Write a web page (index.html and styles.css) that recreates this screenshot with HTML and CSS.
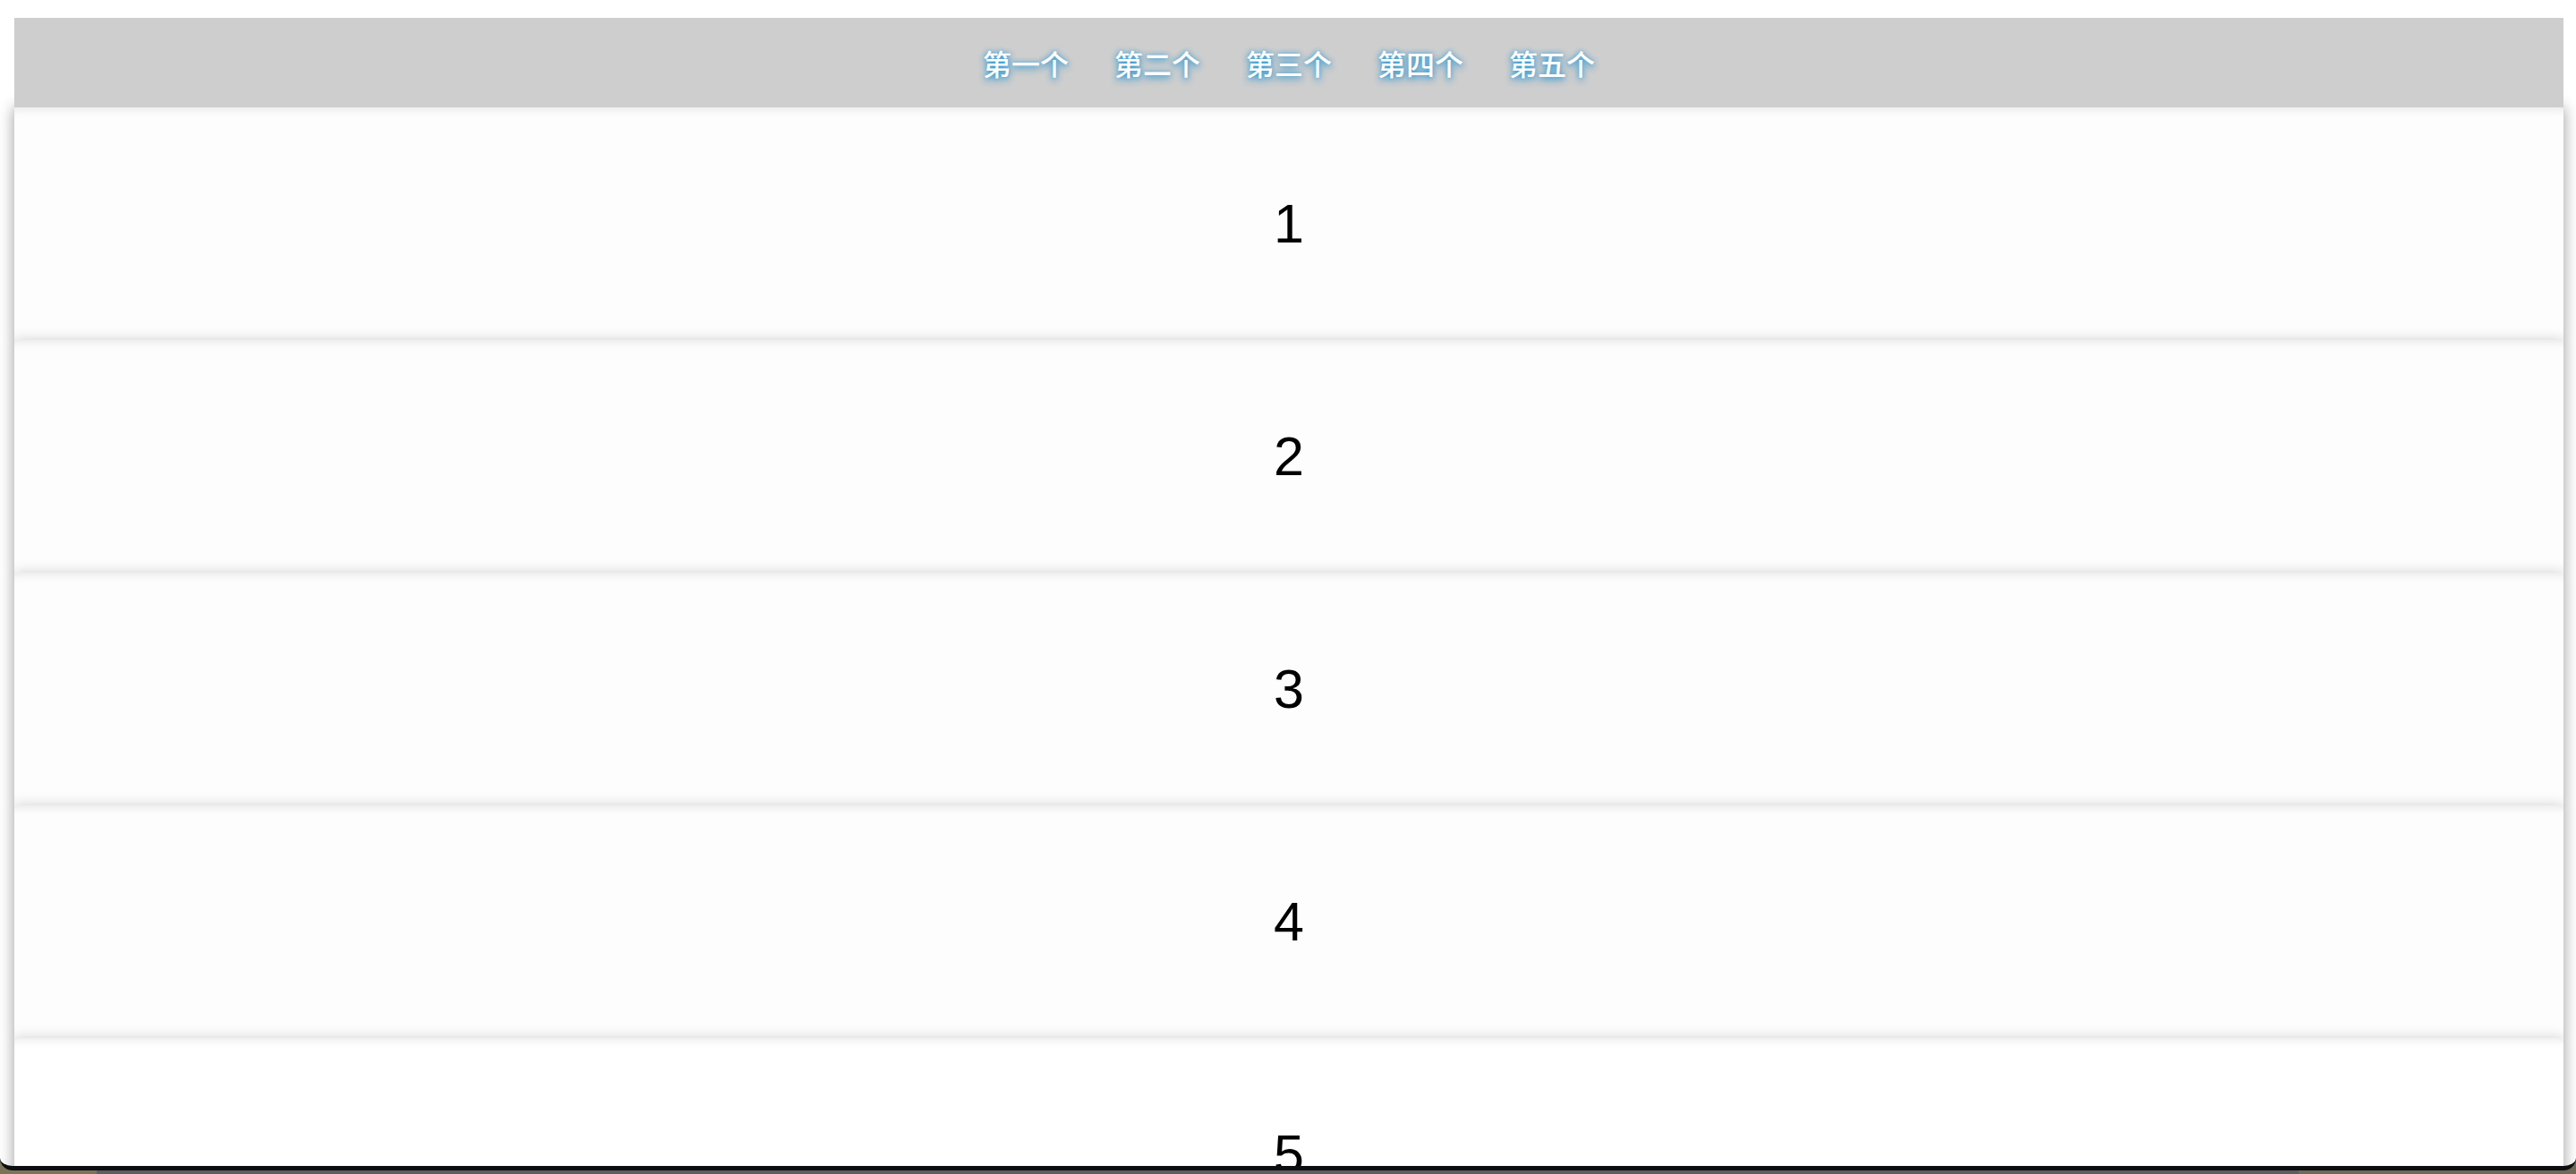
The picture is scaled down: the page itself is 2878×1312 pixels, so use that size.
FILE: index.html
```html
<!DOCTYPE html>
<html lang="zh">
<head>
<meta charset="utf-8">
<title>Tabs</title>
<link rel="stylesheet" href="styles.css">
</head>
<body>
<div class="window">
  <nav class="nav">
    <a class="nav-item">第一个</a>
    <a class="nav-item">第二个</a>
    <a class="nav-item">第三个</a>
    <a class="nav-item">第四个</a>
    <a class="nav-item">第五个</a>
  </nav>
  <main class="panels">
    <section class="panel">1</section>
    <section class="panel">2</section>
    <section class="panel">3</section>
    <section class="panel">4</section>
    <section class="panel panel-last">5</section>
  </main>
</div>
<div class="desktop">
  <div class="desk-left"></div>
  <div class="desk-mid"></div>
  <div class="desk-right"></div>
</div>
</body>
</html>
```

FILE: styles.css
```css
html, body {
  margin: 0;
  padding: 0;
  height: 1312px;
  overflow: hidden;
}
body {
  background: #606060;
  font-family: "Liberation Sans", Arial, sans-serif;
  position: relative;
}
.window {
  height: 1308px;
  background: #ffffff;
  border-bottom: 5px solid #0c0e12;
  border-radius: 0 0 14px 14px;
  overflow: hidden;
  padding: 20px 14px 0 16px;
  box-sizing: border-box;
  display: flex;
  flex-direction: column;
  position: relative;
  z-index: 1;
}
.nav {
  height: 100px;
  flex: none;
  background: #cecece;
  display: flex;
  justify-content: center;
  align-items: center;
  gap: 51px;
  position: relative;
  z-index: 2;
}
.nav-item {
  color: #ffffff;
  font-family: "Noto Sans CJK SC", "Noto Sans", sans-serif;
  font-size: 32px;
  font-weight: 500;
  line-height: 1;
  text-shadow: 0 3px 9px rgba(30, 145, 210, 0.95), 0 0 5px rgba(70, 165, 220, 0.8);
}
.panels {
  flex: 1;
  box-shadow: 0 0 18px rgba(0, 0, 0, 0.24);
  background: #fdfdfd;
}
.panel {
  height: 260px;
  display: flex;
  justify-content: center;
  align-items: center;
  font-size: 61px;
  color: #000;
  background: #fdfdfd;
  box-shadow: 0 0 14px rgba(0, 0, 0, 0.18), inset 0 10px 12px -9px rgba(0, 0, 0, 0.11);
}
.panel-last {
  background: linear-gradient(#ffffff 0%, #ffffff 55%, #f5f5f5 100%);
}
.desktop {
  position: absolute;
  left: 0;
  right: 0;
  bottom: 0;
  height: 12px;
  display: flex;
  z-index: 0;
}
.desk-left {
  width: 108px;
  background: #7b7458;
}
.desk-mid {
  flex: 1;
  background: #5e5e5e;
}
.desk-right {
  width: 310px;
  background: #6f6a55;
}
```
